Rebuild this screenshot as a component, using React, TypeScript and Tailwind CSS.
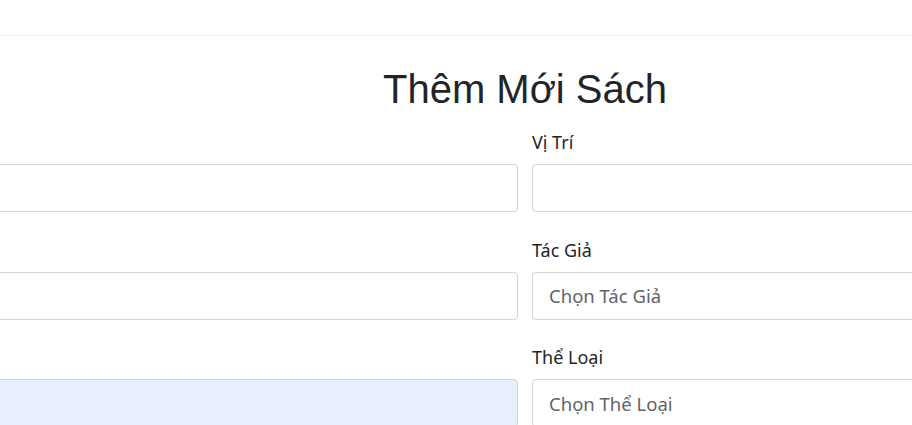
import React from 'react'

const fieldFont = { fontFamily: '"Noto Sans", "Open Sans", sans-serif' }

function Field({
  label,
  placeholder,
  filled,
}: {
  label?: string
  placeholder?: string
  filled?: boolean
}) {
  return (
    <div className="mb-[24.5px] flex flex-col">
      <label className="mb-2 h-[27px] text-[18px] leading-[27px] text-[#212529]">{label ?? '\u00a0'}</label>
      <input
        placeholder={placeholder}
        className={
          filled
            ? 'h-12 w-full rounded-[4px] border border-[#ced4da] bg-[#e8f0fe] px-4 text-[18.5px] outline-none placeholder:text-[#5f646a]'
            : 'h-12 w-full rounded-[4px] border border-[#ced4da] bg-white px-4 text-[18.5px] outline-none placeholder:text-[#5f646a]'
        }
      />
    </div>
  )
}

export default function App() {
  return (
    <div className="h-[425px] w-[912px] overflow-hidden bg-white" style={fieldFont}>
      <header className="h-[36px] border-b border-[#f2f2f2]" />
      <div className="ml-[-25px] w-[1100px]">
        <h1
          className="mt-[29px] mb-4 text-center text-[40px] leading-[48px] text-[#212529]"
          style={{ fontFamily: '"Liberation Sans", Arial, sans-serif' }}
        >
          Thêm Mới Sách
        </h1>
        <div className="grid grid-cols-2 gap-x-[14px]">
          <div className="flex flex-col">
            <Field />
            <Field />
            <Field filled />
          </div>
          <div className="flex flex-col">
            <Field label="Vị Trí" />
            <Field label="Tác Giả" placeholder="Chọn Tác Giả" />
            <Field label="Thể Loại" placeholder="Chọn Thể Loại" />
          </div>
        </div>
      </div>
    </div>
  )
}
